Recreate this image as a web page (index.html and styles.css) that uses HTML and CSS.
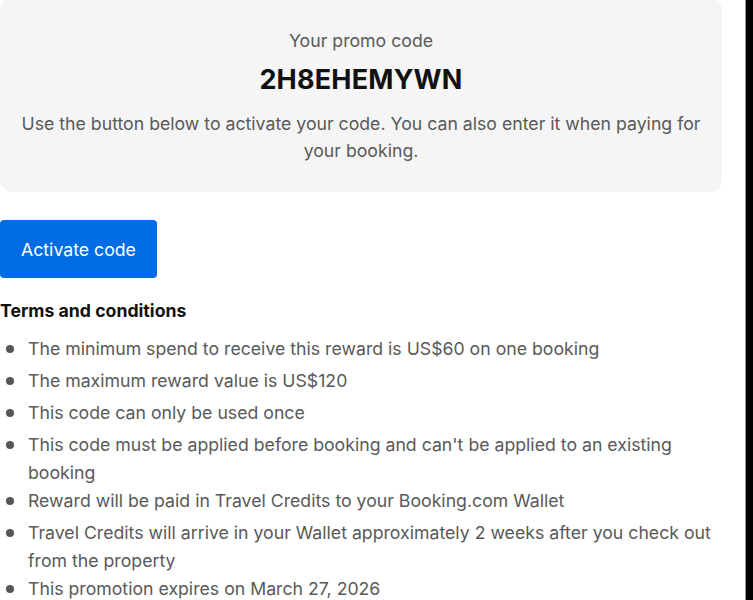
FILE: index.html
```html
<!DOCTYPE html>
<html lang="en">
<head>
<meta charset="utf-8">
<link rel="stylesheet" href="styles.css">
</head>
<body>
<main class="content">
  <section class="promo-card">
    <p class="promo-label">Your promo code</p>
    <p class="promo-code">2H8EHEMYWN</p>
    <p class="promo-desc">Use the button below to activate your code. You can also enter it when paying for your booking.</p>
  </section>
  <button class="activate-btn" type="button">Activate code</button>
  <h2 class="terms-title">Terms and conditions</h2>
  <ul class="terms-list">
    <li>The minimum spend to receive this reward is US$60 on one booking</li>
    <li>The maximum reward value is US$120</li>
    <li>This code can only be used once</li>
    <li>This code must be applied before booking and can't be applied to an existing booking</li>
    <li>Reward will be paid in Travel Credits to your Booking.com Wallet</li>
    <li>Travel Credits will arrive in your Wallet approximately 2 weeks after you check out from the property</li>
    <li>This promotion expires on March 27, 2026</li>
  </ul>
</main>
<div class="edge"></div>
</body>
</html>
```
FILE: styles.css
```css
html {
  margin: 0;
  padding: 0;
  background: #fff;
  overflow: hidden;
}
body {
  margin: 0;
  padding: 0;
  font-family: Inter, "Noto Sans", sans-serif;
  color: #595959;
  height: 600px;
  overflow: hidden;
}
.content {
  width: 722px;
  height: 600px;
  overflow: hidden;
}
.edge {
  position: fixed;
  top: 0;
  right: 0;
  width: 7px;
  height: 100vh;
  background: #000;
  border-left: 1px solid #999;
  z-index: 10;
}
.promo-card {
  margin-top: -2px;
  background: #f5f5f5;
  border-radius: 12px;
  padding: 30px 14px 28px;
  text-align: center;
}
.promo-label {
  margin: 0;
  font-size: 17.7px;
  line-height: 26px;
}
.promo-code {
  margin: 10px 0 0;
  font-size: 27px;
  line-height: 32px;
  font-weight: 700;
  color: #111;
  letter-spacing: 0.2px;
}
.promo-desc {
  margin: 14px 0 0;
  font-size: 17.7px;
  line-height: 27px;
}
.activate-btn {
  display: block;
  margin-top: 28px;
  background: #006ce4;
  color: #fff;
  border: none;
  border-radius: 4px;
  font-family: inherit;
  font-size: 17.7px;
  padding: 0 21px;
  height: 58px;
}
.terms-title {
  margin: 22px 0 0;
  font-size: 17.7px;
  line-height: 22px;
  font-weight: 700;
  color: #111;
}
.terms-list {
  list-style: none;
  margin: 13px 0 0;
  padding: 0;
}
.terms-list li {
  position: relative;
  min-height: 32px;
  padding-left: 28px;
  font-size: 17.7px;
  line-height: 28px;
}
.terms-list li::before {
  content: "";
  position: absolute;
  left: 6px;
  top: 10px;
  width: 8px;
  height: 8px;
  border-radius: 50%;
  background: #555;
}
```
